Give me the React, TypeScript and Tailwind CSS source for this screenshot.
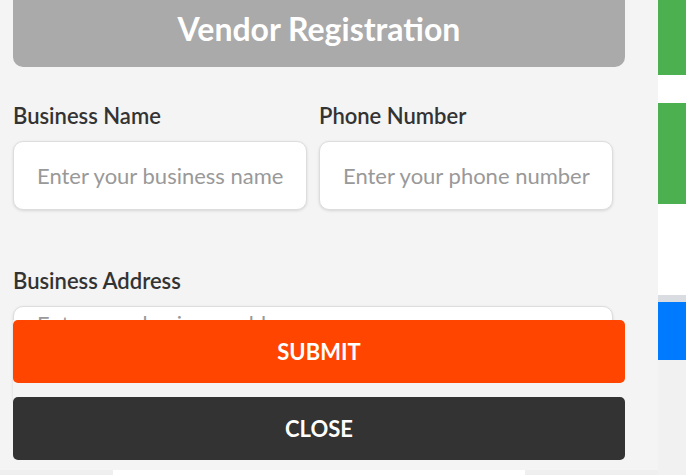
import React from "react";

const font = { fontFamily: 'Lato, "Open Sans", sans-serif' };

function Label({ children }: { children: React.ReactNode }) {
  return <label className="text-[22px] leading-[24px] font-semibold text-[#333] mb-[13px]">{children}</label>;
}

function Field({ label, placeholder }: { label: string; placeholder: string }) {
  return (
    <div className="flex flex-col">
      <Label>{label}</Label>
      <input
        className="h-[69px] w-full rounded-[10px] border border-[#ddd] bg-white pl-[23px] text-[22px] text-[#333] placeholder:text-[#999] shadow-[0_1px_3px_rgba(0,0,0,0.12)] outline-none"
        style={font}
        placeholder={placeholder}
      />
    </div>
  );
}

export default function App() {
  return (
    <div className="flex w-[686px] h-[475px] overflow-hidden font-['Lato','Open_Sans',sans-serif]" style={font}>
      <div className="flex flex-col w-[658px] h-[475px] bg-[#f4f4f4]">
        <div className="relative h-[470px] overflow-hidden">
          <div className="ml-[13px] w-[612px] h-[67px] bg-[#aaa] rounded-b-[10px] flex items-center justify-center">
            <h1 className="text-[32px] font-bold text-white leading-none -mt-[9px]">Vendor Registration</h1>
          </div>
          <div className="ml-[13px] w-[600px] mt-[37px] grid grid-cols-2 gap-x-[12px]">
            <Field label="Business Name" placeholder="Enter your business name" />
            <Field label="Phone Number" placeholder="Enter your phone number" />
          </div>
          <div className="ml-[13px] w-[600px] mt-[59px] flex flex-col">
            <Label>Business Address</Label>
            <textarea
              className="h-[100px] w-full resize-none rounded-[10px] border border-[#ddd] bg-white pl-[23px] pt-[4px] text-[22px] leading-[1.2] text-[#333] placeholder:text-[#999] shadow-[0_1px_3px_rgba(0,0,0,0.12)] outline-none"
              style={font}
              placeholder="Enter your business address"
            />
          </div>
          <div className="absolute left-[13px] top-[320px] w-[612px] h-[150px] bg-[#f4f4f4] flex flex-col gap-[14px]">
            <button className="h-[63px] rounded-[5px] bg-[#ff4500] text-white text-[22px] font-bold" style={font}>SUBMIT</button>
            <button className="h-[63px] rounded-[5px] bg-[#333] text-white text-[22px] font-bold" style={font}>CLOSE</button>
          </div>
        </div>
        <div className="h-[5px] bg-[#efefef]">
          <div className="ml-[113px] w-[412px] h-[5px] bg-white" />
        </div>
      </div>
      <div className="flex flex-col w-[28px] h-[475px]">
        <div className="h-[75px] bg-[#4caf50]" />
        <div className="h-[28px] bg-white" />
        <div className="h-[101px] bg-[#4caf50]" />
        <div className="h-[91px] bg-white" />
        <div className="h-[7px] bg-[#d9dce1]" />
        <div className="h-[58px] bg-[#007bff]" />
        <div className="flex-1 bg-[#f1f1f1]" />
      </div>
    </div>
  );
}
